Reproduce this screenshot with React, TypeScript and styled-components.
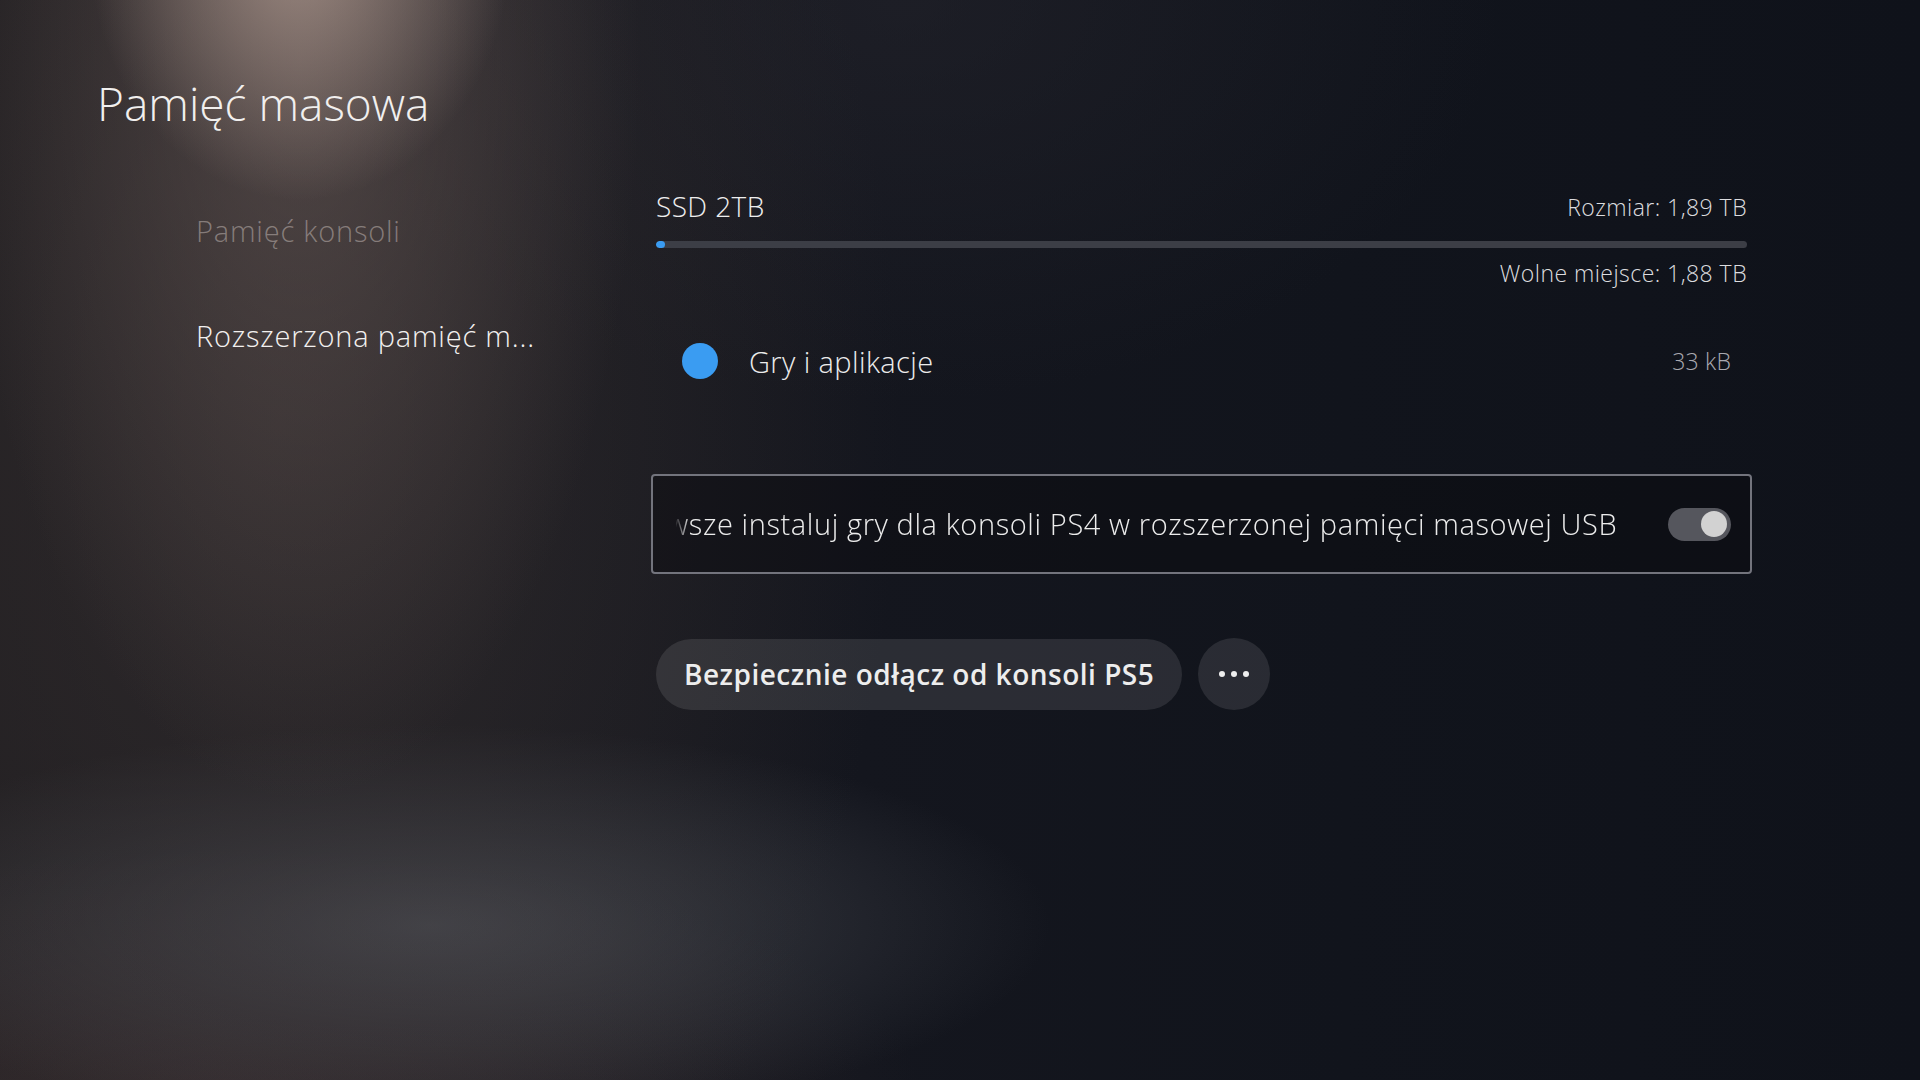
import React from "react";
import styled, { createGlobalStyle } from "styled-components";

const GlobalStyle = createGlobalStyle`
  html, body {
    margin: 0;
    padding: 0;
    height: 100%;
  }
  body {
    background: #10131b;
    font-family: "Open Sans", "Noto Sans", sans-serif;
    color: #ececec;
    overflow: hidden;
  }
  #root {
    min-height: 100vh;
  }
`;

const Screen = styled.div`
  position: relative;
  width: 1920px;
  height: 1080px;
  overflow: hidden;
  box-sizing: border-box;
  padding: 71px 0 0 97px;
  background:
    radial-gradient(ellipse 210px 250px at 300px -50px, rgba(178, 156, 146, 0.78), rgba(178, 156, 146, 0) 100%),
    radial-gradient(ellipse 340px 740px at 300px 60px, rgba(114, 98, 94, 0.52), rgba(114, 98, 94, 0) 100%),
    radial-gradient(ellipse 620px 1000px at 280px 420px, rgba(62, 54, 54, 0.5), rgba(62, 54, 54, 0) 100%),
    radial-gradient(ellipse 620px 200px at 430px 925px, rgba(84, 87, 94, 0.68), rgba(84, 87, 94, 0) 100%),
    radial-gradient(ellipse 700px 240px at 220px 1090px, rgba(66, 52, 54, 0.55), rgba(66, 52, 54, 0) 100%),
    radial-gradient(ellipse 600px 400px at 900px 0px, rgba(38, 38, 46, 0.5), rgba(38, 38, 46, 0) 100%),
    linear-gradient(90deg, #1f1d20 0%, #1b1b20 25%, #14161e 45%, #11141c 70%, #0f121a 100%);
`;

const Title = styled.h1`
  margin: 0;
  font-family: "Open Sans", sans-serif;
  font-weight: 300;
  font-size: 46px;
  line-height: 64px;
  letter-spacing: 0px;
  color: #f1efee;
`;

const Layout = styled.div`
  display: grid;
  grid-template-columns: 559px 1091px;
  margin-top: 46px;
`;

const Nav = styled.nav`
  display: flex;
  flex-direction: column;
  gap: 63px;
  padding: 29px 0 0 99px;
`;

const NavItem = styled.div<{ $active?: boolean }>`
  font-family: "Open Sans", sans-serif;
  font-weight: 300;
  font-size: 29px;
  line-height: 42px;
  letter-spacing: 0.8px;
  white-space: nowrap;
  color: ${(p) => (p.$active ? "#f2f0ef" : "rgba(200, 190, 186, 0.5)")};
`;

const Main = styled.main`
  display: flex;
  flex-direction: column;
  padding-top: 5px;
`;

const DriveHeader = styled.div`
  display: flex;
  justify-content: space-between;
  align-items: flex-end;
`;

const DriveName = styled.div`
  font-size: 28px;
  font-weight: 300;
  line-height: 40px;
  letter-spacing: 0.4px;
  color: #eeeeee;
`;

const SmallInfo = styled.div`
  font-size: 23px;
  font-weight: 300;
  line-height: 34px;
  letter-spacing: 0.45px;
  color: #dcdcdf;
  text-align: right;
`;

const HeaderInfo = styled(SmallInfo)`
  margin-bottom: 2px;
`;

const Bar = styled.div`
  margin-top: 15px;
  height: 7px;
  border-radius: 4px;
  background: #3c3e46;
  overflow: hidden;
  display: flex;
`;

const BarFill = styled.div`
  height: 100%;
  background: #3a9cf2;
  border-radius: 4px;
`;

const FreeSpace = styled(SmallInfo)`
  margin-top: 8px;
`;

const CategoryRow = styled.div`
  display: flex;
  align-items: center;
  margin-top: 49px;
  padding: 0 16px 0 26px;
  height: 44px;
`;

const Dot = styled.span`
  width: 36px;
  height: 36px;
  border-radius: 50%;
  background: #3a9cf2;
  flex: none;
`;

const CategoryName = styled.span`
  margin-left: 31px;
  flex: 1;
  font-size: 29px;
  font-weight: 300;
  letter-spacing: 0.4px;
  color: #ececec;
`;

const CategorySize = styled.span`
  font-size: 23px;
  font-weight: 300;
  letter-spacing: 0.2px;
  color: #a9a9b0;
`;

const ToggleCard = styled.div`
  margin: 91px -5px 0 -5px;
  height: 100px;
  box-sizing: border-box;
  border: 2px solid #73747d;
  border-radius: 4px;
  background: rgba(10, 11, 16, 0.45);
  display: flex;
  align-items: center;
  padding: 0 19px 0 23px;
  gap: 44px;
`;

const MarqueeWindow = styled.div`
  flex: 1;
  overflow: hidden;
  white-space: nowrap;
  -webkit-mask-image: linear-gradient(90deg, rgba(0,0,0,0.1) 0px, #000 14px, #000 100%);
  mask-image: linear-gradient(90deg, rgba(0,0,0,0.1) 0px, #000 14px, #000 100%);
`;

const MarqueeText = styled.span`
  display: inline-block;
  margin-left: -42px;
  font-size: 29px;
  font-weight: 300;
  letter-spacing: 0.6px;
  line-height: 40px;
  color: #ececec;
`;

const Switch = styled.div`
  width: 63px;
  height: 33px;
  border-radius: 17px;
  background: #55565d;
  flex: none;
  display: flex;
  align-items: center;
  justify-content: flex-end;
  padding: 0 4px;
  box-sizing: border-box;
`;

const Knob = styled.span`
  width: 26px;
  height: 26px;
  border-radius: 50%;
  background: #d2d2d2;
`;

const Actions = styled.div`
  display: flex;
  align-items: center;
  gap: 16px;
  margin-top: 64px;
`;

const PillButton = styled.button`
  height: 71px;
  padding: 0 28px;
  border: none;
  border-radius: 36px;
  background: rgba(255, 255, 255, 0.1);
  color: #ededed;
  font-family: "Open Sans", sans-serif;
  font-weight: 600;
  font-size: 28px;
  letter-spacing: 0.5px;
  cursor: pointer;
`;

const RoundButton = styled.button`
  width: 72px;
  height: 72px;
  border: none;
  border-radius: 50%;
  background: rgba(255, 255, 255, 0.1);
  display: flex;
  align-items: center;
  justify-content: center;
  gap: 6px;
  padding: 0;
  cursor: pointer;
`;

const MoreDot = styled.span`
  width: 6px;
  height: 6px;
  border-radius: 50%;
  background: #eeeeee;
`;

export default function App() {
  const usedPercent = 0.8;
  return (
    <>
      <GlobalStyle />
      <Screen>
        <Title>Pamięć masowa</Title>
        <Layout>
          <Nav>
            <NavItem>Pamięć konsoli</NavItem>
            <NavItem $active>Rozszerzona pamięć m...</NavItem>
          </Nav>
          <Main>
            <DriveHeader>
              <DriveName>SSD 2TB</DriveName>
              <HeaderInfo>Rozmiar: 1,89 TB</HeaderInfo>
            </DriveHeader>
            <Bar>
              <BarFill style={{ width: `${usedPercent}%` }} />
            </Bar>
            <FreeSpace>Wolne miejsce: 1,88 TB</FreeSpace>
            <CategoryRow>
              <Dot />
              <CategoryName>Gry i aplikacje</CategoryName>
              <CategorySize>33 kB</CategorySize>
            </CategoryRow>
            <ToggleCard>
              <MarqueeWindow>
                <MarqueeText>
                  Zawsze instaluj gry dla konsoli PS4 w rozszerzonej pamięci masowej USB
                </MarqueeText>
              </MarqueeWindow>
              <Switch>
                <Knob />
              </Switch>
            </ToggleCard>
            <Actions>
              <PillButton>Bezpiecznie odłącz od konsoli PS5</PillButton>
              <RoundButton aria-label="Więcej">
                <MoreDot />
                <MoreDot />
                <MoreDot />
              </RoundButton>
            </Actions>
          </Main>
        </Layout>
      </Screen>
    </>
  );
}
